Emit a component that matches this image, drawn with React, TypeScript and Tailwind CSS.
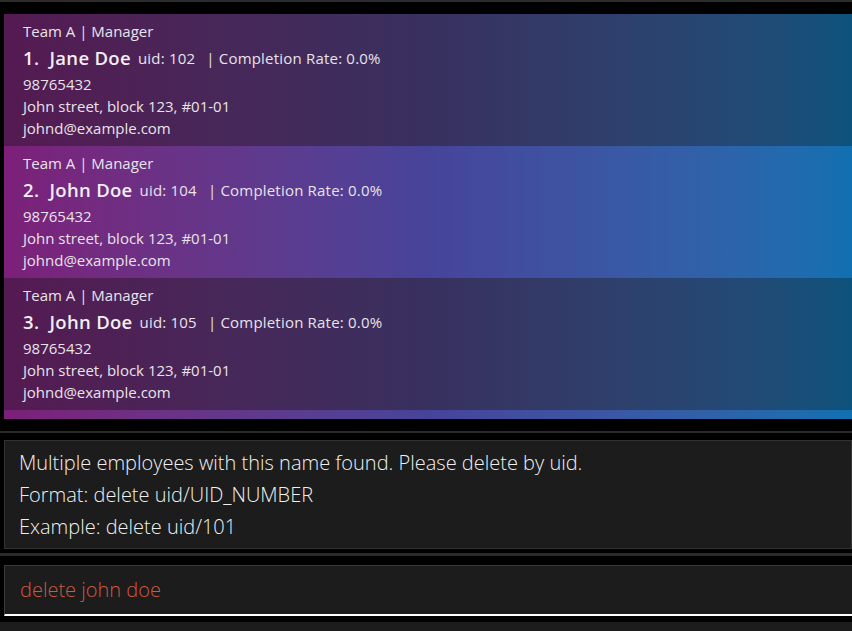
const employees = [
  { idx: 1, name: "Jane Doe", uid: 102 },
  { idx: 2, name: "John Doe", uid: 104 },
  { idx: 3, name: "John Doe", uid: 105 },
]

function EmployeeCard({ idx, name, uid }: { idx: number; name: string; uid: number }) {
  const odd = idx % 2 === 1
  return (
    <div
      className={`h-[132px] pl-[19px] pt-[6px] text-[15px] leading-[22px] text-[#e8e3ea] ${
        odd
          ? "bg-gradient-to-r from-[#541a52] via-[#38305f] to-[#0c527c]"
          : "bg-gradient-to-r from-[#7c1f79] via-[#46449a] to-[#0f70b1]"
      }`}
    >
      <div>Team A | Manager</div>
      <div className="flex items-center h-[31px]">
        <span className="text-[18.5px] font-semibold text-[#f2eef3] tracking-[0.3px]">
          {idx}.&nbsp;&nbsp;{name}
        </span>
        <span className="ml-[7px] tracking-[0.2px]">uid: {uid}</span>
        <span className="ml-[11px] tracking-[0.2px]">| Completion Rate: 0.0%</span>
      </div>
      <div>98765432</div>
      <div>John street, block 123, #01-01</div>
      <div>johnd@example.com</div>
    </div>
  )
}

export default function App() {
  return (
    <div
      className="w-[852px] h-[631px] overflow-hidden bg-black"
      style={{ fontFamily: "'Open Sans', 'Noto Sans', sans-serif" }}
    >
      <div className="h-[2px] bg-[#2b2b2b]" />

      {/* list */}
      <div className="mt-[12px] ml-[4px] h-[405px] overflow-hidden">
        {employees.map((e) => (
          <EmployeeCard key={e.uid} {...e} />
        ))}
        <div className="h-[9px] bg-gradient-to-r from-[#7c1f79] via-[#46449a] to-[#0f70b1]" />
      </div>

      <div className="mt-[12px] h-[2px] bg-[#2b2b2b]" />

      {/* result */}
      <div className="mt-[7px] ml-[4px] h-[109px] border border-[#333] bg-[#1c1c1c] pl-[14px] pt-[6px] text-[20px] leading-[32px] font-light text-[#f0f0f0]">
        <div>Multiple employees with this name found. Please delete by uid.</div>
        <div>Format: delete uid/UID_NUMBER</div>
        <div>Example: delete uid/101</div>
      </div>

      <div className="mt-[4px] h-[3px] bg-[#2b2b2b]" />

      {/* command box */}
      <div className="mt-[9px] ml-[4px] h-[51px] border-t border-l border-[#3a3a3a] border-b-2 border-b-white bg-[#1c1c1c] pl-[15px] flex items-center text-[20px] font-light text-[#d0583e]">
        delete john doe
      </div>

      <div className="mt-[6px] h-[20px] bg-[#1c1c1c]" />
    </div>
  )
}
